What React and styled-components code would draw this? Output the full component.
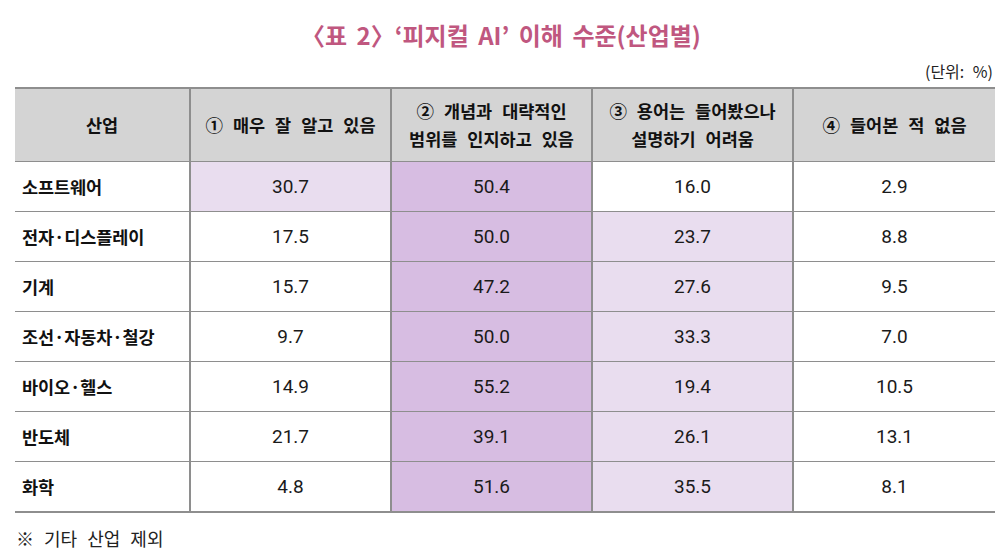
import React from "react";
import styled, { createGlobalStyle } from "styled-components";

const Global = createGlobalStyle`
  html, body { margin: 0; padding: 0; background: #fff; }
  body { font-family: "Noto Sans CJK KR", "Noto Sans", sans-serif; color: #111; }
`;

const Page = styled.div`
  width: 1008px;
  height: 557px;
  box-sizing: border-box;
  padding: 18px 13px 0 15px;
  display: flex;
  flex-direction: column;
`;

const Title = styled.h1`
  margin: 0;
  padding-right: 8px;
  text-align: center;
  font-size: 24px;
  font-weight: 700;
  color: #c0577f;
  line-height: 34px;
  word-spacing: 4px;
  letter-spacing: 0px;
`;

const Unit = styled.div`
  text-align: right;
  font-size: 16px;
  line-height: 20px;
  margin-top: 9px;
  margin-bottom: 6px;
  padding-right: 2px;
  color: #222;
  word-spacing: 5px;
`;

const Table = styled.table`
  width: 980px;
  border-collapse: collapse;
  table-layout: fixed;
  border-top: 2px solid #8e8e8e;
  border-bottom: 2px solid #8e8e8e;
`;

const Th = styled.th`
  background: #d4d4d4;
  height: 72px;
  padding: 0;
  font-size: 17.5px;
  font-weight: 700;
  line-height: 28px;
  text-align: center;
  word-spacing: 6px;
  color: #111;
  border-left: 2px solid #8e8e8e;
  &:first-child { border-left: none; }
`;

const Tr = styled.tr`
  & + & td { border-top: 1px solid #8e8e8e; }
`;

const HeadRow = styled.tr`
  border-bottom: 1px solid #8e8e8e;
`;

const shades = {
  none: "#fff",
  light: "#e9ddef",
  dark: "#d7bde2",
};

const Td = styled.td`
  height: 49px;
  padding: 0;
  text-align: center;
  font-family: Roboto, "Noto Sans CJK KR", sans-serif;
  font-size: 19px;
  color: #1a1a1a;
  background: ${(p) => shades[p.$shade || "none"]};
  border-left: 2px solid #8e8e8e;
`;

const Label = styled.td`
  height: 49px;
  padding: 0 0 0 7px;
  text-align: left;
  font-size: 17.5px;
  font-weight: 700;
  color: #111;
  letter-spacing: -0.1px;
`;

const Note = styled.div`
  margin-top: 12px;
  padding-left: 1px;
  font-size: 18px;
  line-height: 26px;
  color: #222;
  word-spacing: 6px;
`;

const rows = [
  ["소프트웨어", ["30.7", "light"], ["50.4", "dark"], ["16.0"], ["2.9"]],
  ["전자·디스플레이", ["17.5"], ["50.0", "dark"], ["23.7", "light"], ["8.8"]],
  ["기계", ["15.7"], ["47.2", "dark"], ["27.6", "light"], ["9.5"]],
  ["조선·자동차·철강", ["9.7"], ["50.0", "dark"], ["33.3", "light"], ["7.0"]],
  ["바이오·헬스", ["14.9"], ["55.2", "dark"], ["19.4", "light"], ["10.5"]],
  ["반도체", ["21.7"], ["39.1", "dark"], ["26.1", "light"], ["13.1"]],
  ["화학", ["4.8"], ["51.6", "dark"], ["35.5", "light"], ["8.1"]],
];

export default function App() {
  return (
    <>
      <Global />
      <Page>
        <Title>〈표 2〉‘피지컬 AI’ 이해 수준(산업별)</Title>
        <Unit>(단위: %)</Unit>
        <Table>
          <colgroup>
            <col style={{ width: 175 }} />
            <col style={{ width: 201 }} />
            <col style={{ width: 201 }} />
            <col style={{ width: 201 }} />
            <col style={{ width: 202 }} />
          </colgroup>
          <thead>
            <HeadRow>
              <Th>산업</Th>
              <Th>① 매우 잘 알고 있음</Th>
              <Th>
                ② 개념과 대략적인
                <br />
                범위를 인지하고 있음
              </Th>
              <Th>
                ③ 용어는 들어봤으나
                <br />
                설명하기 어려움
              </Th>
              <Th>④ 들어본 적 없음</Th>
            </HeadRow>
          </thead>
          <tbody>
            {rows.map(([label, ...cells]) => (
              <Tr key={label}>
                <Label>{label}</Label>
                {cells.map(([v, s], i) => (
                  <Td key={i} $shade={s}>
                    {v}
                  </Td>
                ))}
              </Tr>
            ))}
          </tbody>
        </Table>
        <Note>※ 기타 산업 제외</Note>
      </Page>
    </>
  );
}
